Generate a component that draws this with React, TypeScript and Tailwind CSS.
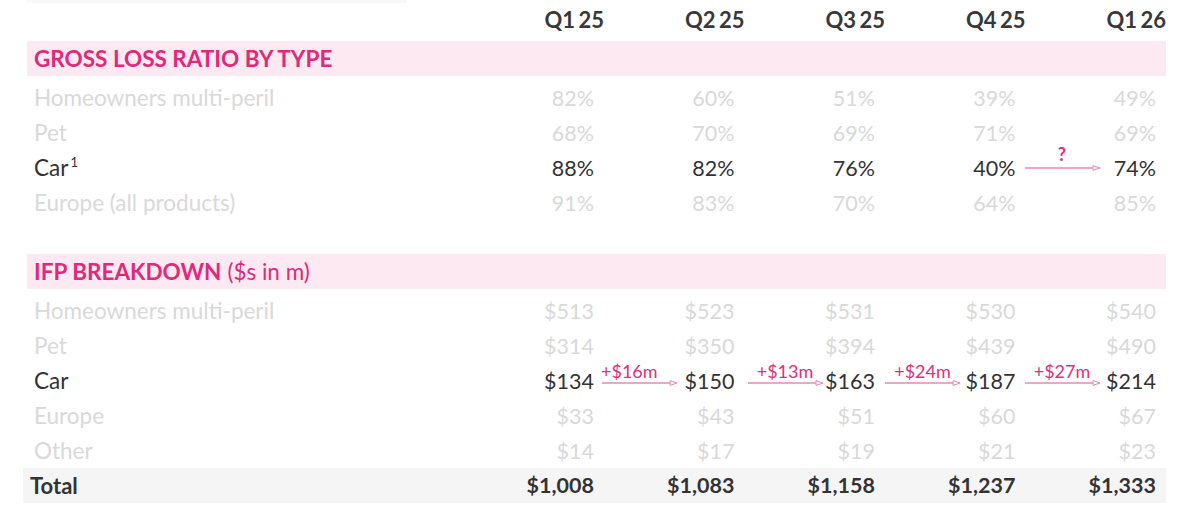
import React from "react";

const QUARTERS = ["Q1 25", "Q2 25", "Q3 25", "Q4 25", "Q1 26"];

type Row = {
  label: React.ReactNode;
  values: string[];
  focus?: boolean;
};

type Jump = { label: string; left: number; labelAlign?: "start" | "center" };

const LOSS_ROWS: Row[] = [
  { label: "Homeowners multi-peril", values: ["82%", "60%", "51%", "39%", "49%"] },
  { label: "Pet", values: ["68%", "70%", "69%", "71%", "69%"] },
  {
    label: (
      <>
        Car<sup className="relative -top-[9px] ml-[2px] text-[13px]">1</sup>
      </>
    ),
    values: ["88%", "82%", "76%", "40%", "74%"],
    focus: true,
  },
  { label: "Europe (all products)", values: ["91%", "83%", "70%", "64%", "85%"] },
];

const IFP_ROWS: Row[] = [
  { label: "Homeowners multi-peril", values: ["$513", "$523", "$531", "$530", "$540"] },
  { label: "Pet", values: ["$314", "$350", "$394", "$439", "$490"] },
  { label: "Car", values: ["$134", "$150", "$163", "$187", "$214"], focus: true },
  { label: "Europe", values: ["$33", "$43", "$51", "$60", "$67"] },
  { label: "Other", values: ["$14", "$17", "$19", "$21", "$23"] },
];

const TOTALS = ["$1,008", "$1,083", "$1,158", "$1,237", "$1,333"];

const LOSS_JUMPS: (Jump | null)[] = [null, null, null, null, { label: "?", left: -2 }];
const IFP_JUMPS: (Jump | null)[] = [
  null,
  { label: "+$16m", left: -3, labelAlign: "start" },
  { label: "+$13m", left: 2 },
  { label: "+$24m", left: -1 },
  { label: "+$27m", left: -2 },
];

function Arrow({ jump, bold, labelTop, lineTop }: { jump: Jump; bold?: boolean; labelTop: number; lineTop: number }) {
  return (
    <div className="pointer-events-none absolute top-0 h-full w-[77px]" style={{ left: jump.left }}>
      <span
        className={`absolute leading-none text-[#e0307c] ${bold ? "text-[18px] font-bold" : "text-[18px]"} ${
          jump.labelAlign === "start" ? "left-0" : "left-1/2 -translate-x-1/2"
        }`}
        style={{ top: labelTop }}
      >
        {jump.label}
      </span>
      <svg width="77" height="8" viewBox="0 0 77 8" className="absolute left-0" style={{ top: lineTop - 4 }}>
        <line x1="1" y1="4" x2="69" y2="4" stroke="#ea86b8" strokeWidth="1.3" />
        <path d="M69 1.6 L76 4 L69 6.4 Z" fill="white" stroke="#ea86b8" strokeWidth="1" />
      </svg>
    </div>
  );
}

function DataRow({
  row,
  jumps,
  labelTop = 0,
  lineTop = 0,
  bold,
}: {
  row: Row;
  jumps?: (Jump | null)[];
  labelTop?: number;
  lineTop?: number;
  bold?: boolean;
}) {
  const tone = row.focus ? "text-[#333333]" : "text-[#d9d9d9]";
  return (
    <div className={`grid h-[35px] grid-cols-[1fr_repeat(5,140.5px)] items-center ${tone}`}>
      <div className="pl-[7px] pt-[5px] text-[22.5px]">{row.label}</div>
      {row.values.map((v, i) => {
        const jump = jumps ? jumps[i] : null;
        return (
          <div key={i} className="relative flex h-full items-center justify-end pr-[10px] pt-[5px] text-[21.5px]">
            {jump && <Arrow jump={jump} bold={bold} labelTop={labelTop} lineTop={lineTop} />}
            {v}
          </div>
        );
      })}
    </div>
  );
}

function Band({ children }: { children: React.ReactNode }) {
  return (
    <div className="flex h-[35px] items-center bg-[#fce9f2] pl-[7px] text-[22.5px] text-[#de2a78]">
      {children}
    </div>
  );
}

export default function App() {
  return (
    <div
      className="relative h-[521px] w-[1200px] overflow-hidden bg-white"
      style={{ fontFamily: "Lato, 'Open Sans', sans-serif" }}
    >
      <div className="absolute left-[27px] top-0 h-[3px] w-[380px] bg-[#f8f8f8]" />
      <div className="ml-[27px] w-[1139px]">
        {/* Header */}
        <div className="grid h-[41px] grid-cols-[1fr_repeat(5,140.5px)] items-center text-[22px] font-bold text-[#383838]">
          <div />
          {QUARTERS.map((q) => (
            <div key={q} className="pb-[2px] text-right [word-spacing:-2px]">
              {q}
            </div>
          ))}
        </div>

        {/* Loss ratio */}
        <Band>
          <span className="font-bold">GROSS LOSS RATIO BY TYPE</span>
        </Band>
        {LOSS_ROWS.map((r, i) => (
          <DataRow
            key={i}
            row={r}
            jumps={r.focus ? LOSS_JUMPS : undefined}
            labelTop={-1}
            lineTop={22}
            bold
          />
        ))}

        <div className="h-[38px]" />

        {/* IFP */}
        <Band>
          <span className="font-bold">IFP BREAKDOWN</span>
          <span className="ml-[6px]">($s in m)</span>
        </Band>
        {IFP_ROWS.map((r, i) => (
          <DataRow
            key={i}
            row={r}
            jumps={r.focus ? IFP_JUMPS : undefined}
            labelTop={3}
            lineTop={24}
          />
        ))}

        {/* Total */}
        <div className="-ml-[4px] mt-[4px] grid h-[35px] grid-cols-[1fr_repeat(5,140.5px)] items-center bg-[#f5f5f5] font-bold text-[#333333]">
          <div className="pl-[7px] text-[22px]">Total</div>
          {TOTALS.map((t) => (
            <div key={t} className="pr-[10px] text-right text-[21.5px]">
              {t}
            </div>
          ))}
        </div>
      </div>
    </div>
  );
}
